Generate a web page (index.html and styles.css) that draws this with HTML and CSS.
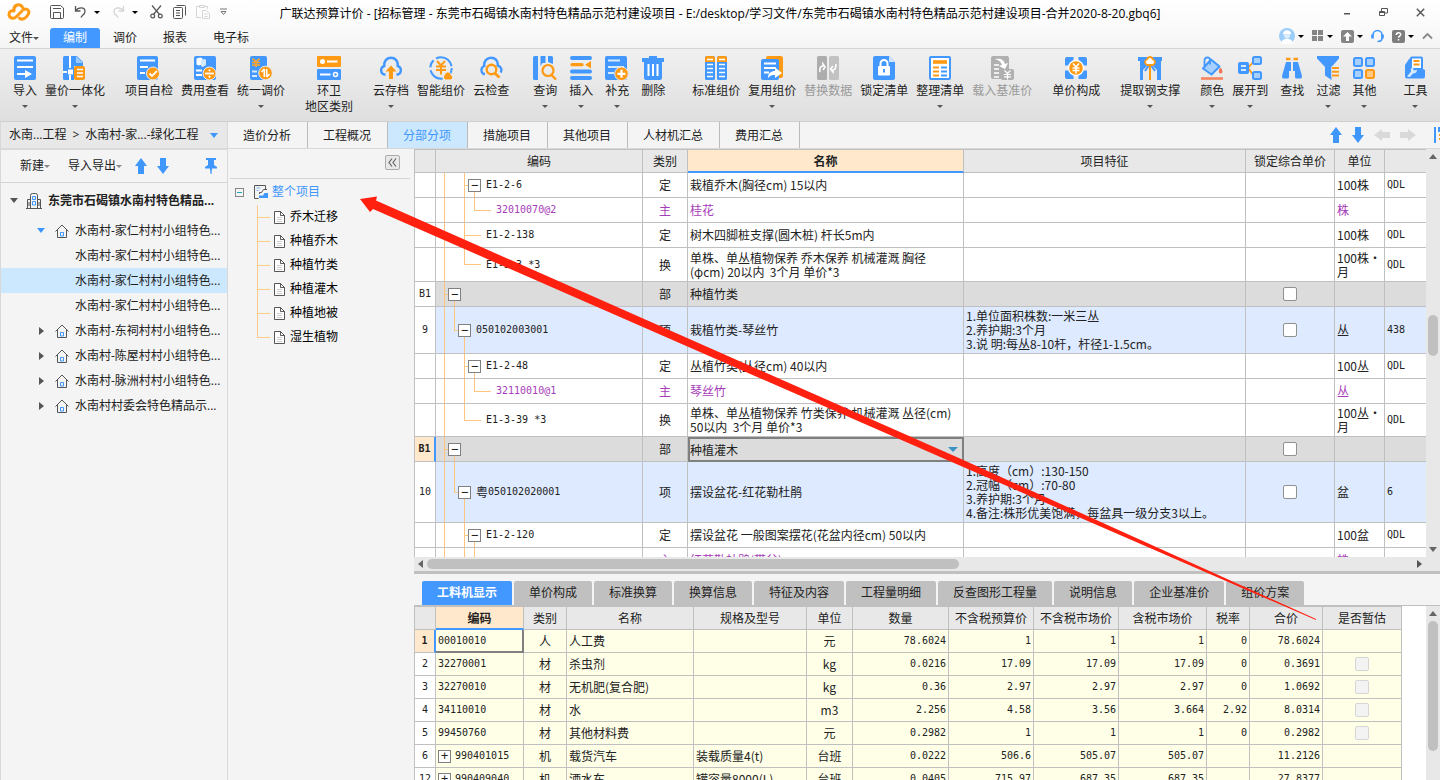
FILE: index.html
```html
<!DOCTYPE html>
<html lang="zh-CN">
<head>
<meta charset="utf-8">
<title>广联达预算计价</title>
<link rel="stylesheet" href="styles.css">
</head>
<body>
<div class="app">
<header class="top">
  <div class="titlebar">
    <div class="quick">
      <svg class="logo" width="24" height="18" viewBox="0 0 24 18" fill="none" stroke="#ff9a14" stroke-width="3" stroke-linecap="round" stroke-linejoin="round"><path d="M14.500 8.500L9 14c-2.500 2.500-7 1-7-2.500 0-3 2.500-4.500 5-3.500C6 1 14 0 15.500 4.500"/><path d="M12.500 15.200c2 1.500 4.500 1 6.500-1s4-4 2.500-6.500-4-2-5.500-.8"/></svg>
      <button class="ic save" aria-label="保存"><svg width="14" height="14" viewBox="0 0 14 14" fill="none" stroke="#555"><path d="M1.500.5h9L13.500 3v9.500a1 1 0 0 1-1 1h-11a1 1 0 0 1-1-1v-11a1 1 0 0 1 1-1zM3 3.500h8M3.500 13V7.500h7V13"/></svg></button>
      <button class="ic" aria-label="撤销"><svg width="13" height="14" viewBox="0 0 13 14" fill="none" stroke="#555" stroke-width="1.300"><path d="M1.500 1v5h5M1.500 6C4 2 11 1.500 11 6.500c0 3-3 3.500-4 6"/></svg></button><i class="caret dark"></i>
      <button class="ic" aria-label="重做"><svg width="13" height="14" viewBox="0 0 13 14" fill="none" stroke="#d4d4d4" stroke-width="1.300"><path d="M11.500 1v5h-5M11.500 6C9 2 2 1.500 2 6.500c0 3 3 3.500 4 6"/></svg></button><i class="caret dark"></i>
      <button class="ic" aria-label="剪切"><svg width="13" height="14" viewBox="0 0 13 14" fill="none" stroke="#555" stroke-width="1.200"><path d="M2 .5l7.500 9M11 .5l-7.500 9"/><circle cx="2.700" cy="11" r="1.900"/><circle cx="10.300" cy="11" r="1.900"/></svg></button>
      <button class="ic" aria-label="复制"><svg width="13" height="14" viewBox="0 0 13 14" fill="none" stroke="#555"><path d="M3.500.5h8a1 1 0 0 1 1 1v9M.5 3.500a1 1 0 0 1 1-1h7a1 1 0 0 1 1 1v9a1 1 0 0 1-1 1h-7a1 1 0 0 1-1-1zM3 5.500h4M3 8h4M3 10.500h4"/></svg></button>
      <button class="ic" aria-label="粘贴"><svg width="14" height="14" viewBox="0 0 14 14" fill="none" stroke="#d6d6d6"><path d="M5 12.500H.5v-11H3M9 1.500h2.500V4M3.500.5h5v2h-5zM6.500 5.500h4l3 3v5h-7zM8.500 9h3M8.500 11.500h3"/></svg></button>
      <button class="ic" aria-label="更多"><svg width="7" height="8" viewBox="0 0 7 8" fill="none" stroke="#777"><path d="M0 1h7M1 3.500h5L3.500 6.500z"/></svg></button>
    </div>
    <h1>广联达预算计价 - [招标管理 - 东莞市石碣镇水南村特色精品示范村建设项目 - E:/desktop/学习文件/东莞市石碣镇水南村特色精品示范村建设项目-合并2020-8-20.gbq6]</h1>
    <div class="winbtns">
      <button class="ic" aria-label="最小化"><svg width="8" height="10" viewBox="0 0 8 10"><path d="M1 6h6v1.500H1z" fill="#555"/></svg></button>
      <button class="ic" aria-label="还原"><svg width="9" height="9" viewBox="0 0 9 9" fill="none" stroke="#555"><path d="M.5 3.500h5v4h-5zM2.500 3V.5h6v4.500H6M.5 4.500h5"/></svg></button>
      <button class="ic" aria-label="关闭"><svg width="9" height="9" viewBox="0 0 9 9" fill="none" stroke="#555" stroke-width="1.400"><path d="M.8.8l7.400 7.400M8.200.8L.8 8.200"/></svg></button>
    </div>
  </div>
  <nav class="menubar">
    <button class="file">文件<i class="caret"></i></button>
    <button class="mtab on">编制</button><button class="mtab">调价</button><button class="mtab">报表</button><button class="mtab">电子标</button>
    <div class="tray">
      <svg width="16" height="16" viewBox="0 0 16 16"><circle cx="8" cy="8" r="8" fill="#9cccfa"/><path d="M2 15c1-4 4-4 6-4s5 0 6 4a8 8 0 0 1-12 0z" fill="#fff"/><path d="M4 5.500C4 1 12 1 12 5.500v1H4z" fill="#fff"/><path d="M5 7h6c0 5-6 5-6 0z" fill="#dceefe"/></svg><i class="caret dark"></i>
      <svg width="12" height="12" viewBox="0 0 12 12" fill="#858585"><path d="M0 0h5v5H0zM6 0h5v5H6zM0 6h5v5H0zM6 6h5v5H6z"/></svg><i class="caret dark"></i>
      <svg width="13" height="13" viewBox="0 0 13 13"><rect width="13" height="13" rx="2" fill="#858585"/><path d="M6.500 2L11 6.500H8V11H5V6.500H2z" fill="#fff"/></svg><i class="caret dark"></i>
      <svg class="head" width="13" height="14" viewBox="0 0 13 14" fill="none" stroke="#3f97fb" stroke-width="1.600"><path d="M2 7V6a4.500 4.500 0 0 1 9 0v3c0 2.500-2 3.500-4.500 3.500"/><path d="M1.500 5.500v4M11.500 5.500v4" stroke-width="2.600"/></svg>
      <svg width="13" height="13" viewBox="0 0 13 13"><rect width="13" height="13" rx="2" fill="#7d7d7d"/><path d="M4.300 5c0-3 4.400-3 4.400-.4 0 1.500-2.200 1.600-2.200 3.200M6.500 9v1.600" stroke="#fff" stroke-width="1.500" fill="none"/></svg><i class="caret dark"></i>
      <svg width="11" height="8" viewBox="0 0 11 8" fill="none" stroke="#888" stroke-width="1.800"><path d="M1 6.500L5.500 2 10 6.500"/></svg>
    </div>
  </nav>
  <div class="ribbon">
    <div class="grp">
      <button class="tool"><svg viewBox="0 0 24 24"><rect x="1" width="22" height="24" rx="2" fill="#4298ff"/><path d="M4 4.500h16M4 11h16M4 18h9" stroke="#fff" stroke-width="2"/><path d="M12 14l7 4-7 4z" fill="#fff"/></svg><span>导入</span><i class="caret"></i></button>
      <button class="tool"><svg viewBox="0 0 24 24"><path d="M0 1.500Q0 0 1.500 0H14l6 6v4h-9v14H1.500Q0 24 0 22.500z" fill="#4298ff"/><path d="M13 0l7 7h-7z" fill="#9dcbff"/><path d="M7 0v12M7 19v5M0 16h4" stroke="#fff" stroke-width="2"/><path d="M5 13.500h5v5H5z" fill="#fff"/><rect x="11" y="10" width="11" height="14" rx="2" fill="#ff9a14"/><path d="M14 13.500h6M14 17h6M14 20.500h6" stroke="#fff" stroke-width="1.400"/></svg><span>量价一体化</span><i class="caret"></i></button>
    </div>
    <div class="grp">
      <button class="tool"><svg viewBox="0 0 24 24"><rect x="0" width="21" height="24" rx="2" fill="#4298ff"/><path d="M3 4.500h15M3 11h8M3 17h5" stroke="#fff" stroke-width="2"/><circle cx="16" cy="17.500" r="6.500" fill="#ff9a14" stroke="#eee"/><path d="M12.500 17.500l2.500 2.500 5-5" stroke="#fff" stroke-width="1.800" fill="none"/></svg><span>项目自检</span></button>
      <button class="tool"><svg viewBox="0 0 24 24"><rect x="1" width="22" height="24" rx="2" fill="#4298ff"/><path d="M3.500 2.500l4-1 2 1v6l-4 1-2-1z" fill="#fff"/><path d="M8 4l4-1 1 1v5l-3 2-2-1z" fill="#d6eaff"/><path d="M3 14.500h6M3 19h6" stroke="#fff" stroke-width="2"/><circle cx="16.500" cy="17.500" r="6.500" fill="#ff9a14" stroke="#eee"/><path d="M12 17.500h9" stroke="#fff" stroke-width="1.800"/><circle cx="16.500" cy="14.300" r="1.100" fill="#fff"/><circle cx="16.500" cy="20.700" r="1.100" fill="#fff"/></svg><span>费用查看</span></button>
      <button class="tool"><svg viewBox="0 0 24 24"><rect x="1" width="17" height="24" rx="2" fill="#4298ff"/><path d="M3.500 2.500L7 6l3.500-3.500M3 6.500h8M3 9h8M7 6v5" stroke="#ffa52c" stroke-width="1.700" fill="none"/><path d="M3 15.500h5M3 20h5" stroke="#d6eaff" stroke-width="2"/><circle cx="16.500" cy="17" r="6.800" fill="#ff9a14" stroke="#eee"/><path d="M15.300 13v8M12.500 16l2.800-3M17.700 21v-8M20.500 18l-2.800 3" stroke="#fff" stroke-width="1.600" fill="none"/></svg><span>统一调价</span><i class="caret"></i></button>
    </div>
    <div class="grp">
      <button class="tool"><svg viewBox="0 0 24 24"><rect width="24" height="11" rx="1" fill="#ff9a14"/><rect y="13" width="24" height="11" rx="1" fill="#4298ff"/><circle cx="5.500" cy="5.500" r="2.500" fill="#fff"/><path d="M10 5.500h10.500M3 18.500h10.500" stroke="#fff" stroke-width="2"/><circle cx="18.500" cy="18.500" r="2" fill="#4298ff" stroke="#fff" stroke-width="1.500"/></svg><span>环卫</span><span>地区类别</span></button>
    </div>
    <div class="grp">
      <button class="tool"><svg viewBox="0 0 24 24"><path d="M6.500 18.500H5a4.500 4.500 0 0 1 .3-8.500C4-1 20-1 18.700 10a4.500 4.500 0 0 1 .3 8.500h-1.500" fill="none" stroke="#4298ff" stroke-width="2.400"/><path d="M12 9.500l5.500 6H14V23h-4v-7.500H6.500z" fill="#ff9a14"/></svg><span>云存档</span><i class="caret"></i></button>
      <button class="tool"><svg viewBox="0 0 24 24"><circle cx="12" cy="12" r="10.700" fill="none" stroke="#4298ff" stroke-width="2" stroke-dasharray="12 3 16 3 8 3 20 3"/><path d="M8 5l4 4.500L16 5M7 10.500h10M7 14h10M12 9v9.500" stroke="#ff9a14" stroke-width="2" fill="none"/><path d="M16 24a3.500 3.500 0 0 1-.3-5.500c1-3.500 5.300-3.500 6 0a3 3 0 0 1 .3 5.500z" fill="#ff9a14" stroke="#eee"/></svg><span>智能组价</span></button>
      <button class="tool"><svg viewBox="0 0 24 24"><path d="M6 18H4.500a4.500 4.500 0 0 1 .8-8C4-1 20-1 18.700 9.500a4.500 4.500 0 0 1 2.800 7" fill="none" stroke="#4298ff" stroke-width="2.400"/><circle cx="12.500" cy="13.500" r="4.800" fill="none" stroke="#ff9a14" stroke-width="2.400"/><path d="M16 17.500l4.500 4" stroke="#ff9a14" stroke-width="2.800"/></svg><span>云检查</span></button>
    </div>
    <div class="grp query">
      <button class="tool"><svg viewBox="0 0 24 24"><path d="M0 1.500Q0 0 1.500 0H5v24H1.500Q0 24 0 22.500zM7.500 0h5v7h-3l-2 3zM15 0h3.500Q20 0 20 1.500V8l-5-2z" fill="#4298ff"/><circle cx="15" cy="14.500" r="5.500" fill="none" stroke="#ff9a14" stroke-width="2.200"/><path d="M18.500 19l4.500 4.500" stroke="#ff9a14" stroke-width="2.400"/></svg><span>查询</span><i class="caret"></i></button>
      <button class="tool"><svg viewBox="0 0 24 24"><path d="M3 2h18M3 15.500h18M3 22h18" stroke="#4298ff" stroke-width="4" stroke-linecap="round"/><path d="M3 8.700h10" stroke="#ff9a14" stroke-width="3.200" stroke-linecap="round"/><path d="M22 5v7.500l-6-3.700z" fill="#ff9a14"/></svg><span>插入</span><i class="caret"></i></button>
      <button class="tool"><svg viewBox="0 0 24 24"><rect width="22" height="24" rx="2" fill="#4298ff"/><path d="M3 4.500h12M3 11h16M3 17h6" stroke="#d6eaff" stroke-width="2"/><circle cx="16.500" cy="17.800" r="6.800" fill="#ff9a14" stroke="#e8e8e8"/><path d="M12.500 17.800h8M16.500 13.800v8" stroke="#fff" stroke-width="2.200"/></svg><span>补充</span><i class="caret"></i></button>
      <button class="tool"><svg viewBox="0 0 24 24"><path d="M8 0h8v2h7v4h-2v16q0 2-2 2H5q-2 0-2-2V6H1V2h7z" fill="#4298ff"/><path d="M7.500 8v12M12 8v12M16.500 8v12" stroke="#fff" stroke-width="2"/></svg><span>删除</span></button>
    </div>
    <div class="grp compose">
      <button class="tool"><svg viewBox="0 0 24 24"><rect x="1" width="10" height="24" rx="1.500" fill="#4298ff"/><rect x="13" width="10" height="24" rx="1.500" fill="#4298ff"/><path d="M1 6V1.500L2.500 0h7L11 1.500V6zM13 6V1.500L14.500 0h7L23 1.500V6z" fill="#ff9a14"/><path d="M3 3.500h6M15 3.500h6M3 8.500h6M15 8.500h6M3 12.500h6M15 12.500h6M3 16.500h6M15 16.500h6M3 20.500h6M15 20.500h6" stroke="#fff" stroke-width="1.700"/></svg><span>标准组价</span></button>
      <button class="tool"><svg viewBox="0 0 24 24"><rect x="6" width="17" height="22" rx="2" fill="#ff9a14"/><rect x="1" y="3" width="18" height="21" rx="2" fill="#4298ff"/><path d="M4 7.500h12M4 12h12M4 16.500h5" stroke="#fff" stroke-width="1.800"/><path d="M8 22c0-5 3-7 7-7v-3.500l7 5.500-7 5v-3c-3 0-5 .5-7 3z" fill="#fff"/></svg><span>复用组价</span><i class="caret"></i></button>
      <button class="tool off" disabled><svg viewBox="0 0 24 24"><rect x="1" width="10" height="24" rx="1.500" fill="#adadad"/><rect x="13" width="10" height="24" rx="1.500" fill="#c2c2c2"/><path d="M4 16c-1-4 1-6 3-6V8l2 3-2 3M20 8c0 5-2 6-3 6v2l-2.500-3L17 10" fill="none" stroke="#fff" stroke-width="1.600"/></svg><span>替换数据</span></button>
      <button class="tool"><svg viewBox="0 0 24 24"><path d="M3 0h14l6 6v16q0 2-2 2H3q-2 0-2-2V2q0-2 2-2z" fill="#4298ff"/><path d="M17 0l6 6h-6z" fill="#d0e6ff"/><rect x="6" y="10" width="12" height="9.500" rx="1" fill="#fff"/><path d="M8.500 10V7.500a3.500 3.500 0 0 1 7 0V10" fill="none" stroke="#fff" stroke-width="2"/><path d="M12 13v3.500" stroke="#4298ff" stroke-width="2"/></svg><span>锁定清单</span></button>
      <button class="tool"><svg viewBox="0 0 24 24"><rect x="2" y="1" width="20" height="22" rx="1" fill="#fff" stroke="#4298ff" stroke-width="2"/><path d="M5 6h14" stroke="#ff9a14" stroke-width="3.600"/><path d="M5 11.500h6M5 15.500h6M5 19.500h6" stroke="#ff9a14" stroke-width="2"/><path d="M13 11.500h6M13 15.500h6M13 19.500h6" stroke="#4298ff" stroke-width="2"/></svg><span>整理清单</span><i class="caret"></i></button>
      <button class="tool off" disabled><svg viewBox="0 0 24 24"><path d="M3 0h15l1 2v20l-1 1H3q-2 0-2-2V2q0-2 2-2z" fill="#b0b0b0"/><path d="M4 9h5M4 13h5M4 17h5M4 21h5" stroke="#fff" stroke-width="1.600"/><path d="M5 3c6-1 9 1 10 5l3-1-3 6-6-3 3-1c-1-3-3-5-7-6z" fill="#fff"/><rect x="11" y="13" width="13" height="11" rx="2" fill="#b0b0b0"/><path d="M14.500 14.500l3 3 3-3M14 18.500h7M14 20.800h7M17.500 17.500v6" stroke="#fff" stroke-width="1.200" fill="none"/></svg><span>载入基准价</span></button>
    </div>
    <div class="grp">
      <button class="tool"><svg viewBox="0 0 24 24"><path d="M1 3q0-2 2-2h6.500v3h5V1H21q2 0 2 2v6.500h-3v5h3V21q0 2-2 2h-6.500v-3h-5v3H3q-2 0-2-2v-6.500h3v-5H1z" fill="#4298ff"/><circle cx="12" cy="12" r="8.200" fill="#fff"/><circle cx="12" cy="12" r="6.800" fill="#ff9a14"/><path d="M9 7.500l3 3.500 3-3.500M8.500 12h7M8.500 14.500h7M12 11v6.500" stroke="#fff" stroke-width="1.600" fill="none"/></svg><span>单价构成</span></button>
    </div>
    <div class="grp">
      <button class="tool"><svg viewBox="0 0 24 24"><path d="M0 1h24v4h-1v19h-4V14l-5-5h-4l-5 5v10H2V5H0z" fill="#4298ff"/><path d="M10.500 10L7 15M13.500 10l3.500 5" stroke="#4298ff" stroke-width="2"/><path d="M12 8v16" stroke="#ff9a14" stroke-width="2"/><path d="M7 6q0-2 2-2.500Q10 1 12 1t3 2.500q2 .5 2 2.500t-2 3H9Q7 8 7 6z" fill="#fff" stroke="#ff9a14" stroke-width="1.800"/></svg><span>提取钢支撑</span><i class="caret"></i></button>
    </div>
    <div class="grp find">
      <div class="pair">
        <button class="tool"><svg viewBox="0 0 24 24"><path d="M11 3.500l8.500 7-8 8L3 12.500z" fill="#a6d0ff" stroke="#4298ff" stroke-width="2" stroke-linejoin="round"/><path d="M4.500 10V4.500q0-3 2.800-3T10 4v4.500" fill="none" stroke="#4298ff" stroke-width="1.800"/><path d="M20.500 12q3 5 .2 5t-.2-5z" fill="#f5724e" stroke="#f5724e"/><path d="M1 22.500h22" stroke="#f5845f" stroke-width="2.600"/></svg><span>颜色</span><i class="caret"></i></button>
        <button class="tool"><svg viewBox="0 0 24 24"><path d="M10 12l6-7M10 12l6 8" stroke="#ff9a14" stroke-width="1.800"/><rect x="0" y="6" width="11" height="12" rx="2" fill="#4298ff"/><path d="M3 10h5M3 14h5" stroke="#d6eaff" stroke-width="1.800"/><rect x="15" y="1" width="8" height="7" rx="1.500" fill="#a6d0ff" stroke="#4298ff" stroke-width="2"/><rect x="15" y="16" width="8" height="7" rx="1.500" fill="#a6d0ff" stroke="#4298ff" stroke-width="2"/></svg><span>展开到</span><i class="caret"></i></button>
      </div>
      <button class="tool"><svg viewBox="0 0 24 24"><path d="M6 6h5v9H9v6q0 1.500-1.500 1.500h-4Q2 22.500 2 20zM18 6h-5v9h2v6q0 1.500 1.500 1.500h4Q22 22.500 22 20z" fill="#4298ff"/><path d="M6 3h4.500M13.500 3H18" stroke="#ff9a14" stroke-width="2.400"/></svg><span>查找</span></button>
      <button class="tool"><svg viewBox="0 0 24 24"><path d="M1 0h22v2.500L15.500 11v13L9 19.500V11L1 2.500z" fill="#4298ff"/><path d="M15.500 12h8M15.500 15.500h8M15.500 19h8" stroke="#eee" stroke-width="3.600"/><path d="M16 12h7M16 15.800h7M16 19.600h7" stroke="#ff9a14" stroke-width="2"/></svg><span>过滤</span><i class="caret"></i></button>
      <button class="tool"><svg viewBox="0 0 24 24" stroke-width="2"><g fill="#a6d0ff" stroke="#4298ff"><rect x="2" y="2" width="8" height="8" rx="1.500"/><rect x="14" y="2" width="8" height="8" rx="1.500"/><rect x="2" y="14" width="8" height="8" rx="1.500"/></g><rect x="14" y="14" width="8" height="8" rx="1.500" fill="#ffc982" stroke="#ff9a14"/></svg><span>其他</span><i class="caret"></i></button>
    </div>
    <div class="grp misc">
      <button class="tool"><svg viewBox="0 0 24 24"><rect x="8" y="1.500" width="11" height="13" rx="1" fill="#fff" stroke="#4298ff" stroke-width="2"/><path d="M10.500 5h6M10.500 8.500h6" stroke="#ff9a14" stroke-width="1.800"/><path d="M2 9l4-6 2-1v10h10l4 2v6.500q0 2-2 2H4q-2 0-2-2z" fill="#4298ff"/><path d="M4 20.500l4-5q-1-4 3-5l-1 3 2 1 2-1q0 4-4 4l-3 3.500z" fill="#d6eaff"/></svg><span>工具</span><i class="caret"></i></button>
    </div>
  </div>
</header>
<div class="body">
  <aside class="left">
    <button class="crumb">水南...工程 <b>&gt;</b> 水南村-家...-绿化工程<i class="caret blue"></i></button>
    <div class="ltools">
      <button>新建<i class="caret gray"></i></button>
      <button>导入导出<i class="caret gray"></i></button>
      <button class="ic" aria-label="上移"><svg width="12" height="16" viewBox="0 0 12 16" fill="#3f97fb"><path d="M6 0l6 8H9v8H3V8H0z"/></svg></button>
      <button class="ic" aria-label="下移"><svg width="12" height="16" viewBox="0 0 12 16" fill="#3f97fb"><path d="M6 16l6-8H9V0H3v8H0z"/></svg></button>
      <button class="ic pin" aria-label="固定"><svg width="12" height="16" viewBox="0 0 12 16" fill="#3f97fb"><path d="M1 0h10v2H9v5l3 2v1.500H7L6.500 16h-1L5 10.500H0V9l3-2V2H1z"/></svg></button>
    </div>
    <ul class="tree">
      <li class="root"><i class="caret"></i><svg width="16" height="16" viewBox="0 0 16 16" fill="none" stroke="#555"><path d="M0 15.500h16M4.500 15V2.500q0-2 2-2h3q2 0 2 2V15M1.500 15V6.500h3M11.500 6.500h3V15M3 9v4M13 9v4"/><path d="M6.500 3.500h3v3h-3zM6.500 8.500h3V12h-3z" stroke="#3f97fb"/></svg>东莞市石碣镇水南村特色精品...</li>
      <li class="node"><i class="caret blue"></i><svg class="house" viewBox="0 0 14 14"><use href="#house"/></svg>水南村-家仁村村小组特色...</li>
      <li class="sub">水南村-家仁村村小组特色...</li>
      <li class="sub on">水南村-家仁村村小组特色...</li>
      <li class="sub">水南村-家仁村村小组特色...</li>
      <li class="node"><i class="caret side"></i><svg class="house" viewBox="0 0 14 14"><use href="#house"/></svg>水南村-东祠村村小组特色...</li>
      <li class="node"><i class="caret side"></i><svg class="house" viewBox="0 0 14 14"><use href="#house"/></svg>水南村-陈屋村村小组特色...</li>
      <li class="node"><i class="caret side"></i><svg class="house" viewBox="0 0 14 14"><use href="#house"/></svg>水南村-脉洲村村小组特色...</li>
      <li class="node"><i class="caret side"></i><svg class="house" viewBox="0 0 14 14"><use href="#house"/></svg>水南村村委会特色精品示...</li>
    </ul>
    <svg class="defs" aria-hidden="true"><defs>
      <g id="house" fill="none"><path d="M.5 7.500L7 1l6.500 6.500M2.500 6v7.500h9V6" stroke="#555"/><path d="M5.500 8.500h3v3.500h-3z" stroke="#3f97fb"/></g>
      <g id="doc" fill="none"><path d="M.5.5h6l4 4v8h-10z" fill="#fff" stroke="#555"/><path d="M6.500.5v4h4" stroke="#555"/><path d="M3 6.500h5M3 8.500h5M3 10.500h5" stroke="#ccc"/></g>
    </defs></svg>
  </aside>
  <main class="main">
    <nav class="tabs">
      <button>造价分析</button><button>工程概况</button><button class="on">分部分项</button><button>措施项目</button><button>其他项目</button><button>人材机汇总</button><button>费用汇总</button>
      <div class="moves">
        <button class="ic" aria-label="上移行"><svg width="12" height="16" viewBox="0 0 12 16" fill="#3f97fb"><path d="M6 0l6 8H9v8H3V8H0z"/></svg></button>
        <button class="ic" aria-label="下移行"><svg width="12" height="16" viewBox="0 0 12 16" fill="#3f97fb"><path d="M6 16l6-8H9V0H3v8H0z"/></svg></button>
        <button class="ic" aria-label="升级"><svg width="16" height="12" viewBox="0 0 16 12" fill="#d9d9d9"><path d="M0 6l8-6v3h8v6H8v3z"/></svg></button>
        <button class="ic" aria-label="降级"><svg width="16" height="12" viewBox="0 0 16 12" fill="#d9d9d9"><path d="M16 6L8 0v3H0v6h8v3z"/></svg></button>
        <button class="ic last" aria-label="列设置"><svg width="6" height="16" viewBox="0 0 6 16"><path d="M0 0h2v16H0zM4 0h2v5H4z" fill="#3f97fb"/><path d="M5 7h1v2H5zM5 11h1v2H5z" fill="#ff9a14"/></svg></button>
      </div>
    </nav>
    <div class="work">
      <section class="outline">
        <div class="fold"><button aria-label="收起"><svg width="9" height="9" viewBox="0 0 9 9" fill="none" stroke="#666" stroke-width="1.200"><path d="M4 .5l-3 4 3 4M8 .5l-3 4 3 4"/></svg></button></div>
        <div class="all"><i class="mbox"></i><svg width="14" height="14" viewBox="0 0 14 14" fill="none"><path d="M4.500 13.500h-4V.5h11v4M13 4.500H9.500l-2 3h-2v1.500" stroke="#555"/><path d="M2.500 3h4M2.500 5.500h2" stroke="#7db8fa"/><path d="M5 13v-2.500h4L10.500 8H14v5z" fill="#3f97fb"/></svg>整个项目</div>
        <ul>
          <li><svg viewBox="0 0 11 13"><use href="#doc"/></svg>乔木迁移</li>
          <li><svg viewBox="0 0 11 13"><use href="#doc"/></svg>种植乔木</li>
          <li><svg viewBox="0 0 11 13"><use href="#doc"/></svg>种植竹类</li>
          <li><svg viewBox="0 0 11 13"><use href="#doc"/></svg>种植灌木</li>
          <li><svg viewBox="0 0 11 13"><use href="#doc"/></svg>种植地被</li>
          <li><svg viewBox="0 0 11 13"><use href="#doc"/></svg>湿生植物</li>
        </ul>
      </section>
      <section class="panes">
        <div class="upper">
          <div class="view">
            <table class="bill">
              <colgroup><col class="c-no"><col class="c-code"><col class="c-kind"><col class="c-name"><col><col class="c-lock"><col class="c-unit"><col class="c-qty"></colgroup>
              <thead><tr><th></th><th>编码</th><th>类别</th><th class="cur">名称</th><th>项目特征</th><th>锁定综合单价</th><th>单位</th><th></th></tr></thead>
              <tbody>
                <tr><td></td><td class="code quota"><button class="box">−</button>E1-2-6</td><td>定</td><td>栽植乔木(胸径cm) 15以内</td><td></td><td></td><td>100株</td><td class="mono">QDL</td></tr>
                <tr class="mat"><td></td><td class="code material">32010070@2</td><td>主</td><td>桂花</td><td></td><td></td><td>株</td><td></td></tr>
                <tr><td></td><td class="code leaf">E1-2-138</td><td>定</td><td>树木四脚桩支撑(圆木桩) 杆长5m内</td><td></td><td></td><td>100株</td><td class="mono">QDL</td></tr>
                <tr class="r2"><td></td><td class="code leaf end">E1-3-3 *3</td><td>换</td><td>单株、单丛植物保养 乔木保养 机械灌溉 胸径<br>(φcm) 20以内&nbsp; 3个月 单价*3</td><td></td><td></td><td>100株·<br>月</td><td class="mono">QDL</td></tr>
                <tr class="part"><td>B1</td><td class="code section"><button class="box">−</button></td><td>部</td><td>种植竹类</td><td></td><td><input type="checkbox" aria-label="锁定种植竹类"></td><td></td><td></td></tr>
                <tr class="item r3"><td>9</td><td class="code entry"><button class="box">−</button>050102003001</td><td>项</td><td>栽植竹类-琴丝竹</td><td>1.单位面积株数:一米三丛<br>2.养护期:3个月<br>3.说 明:每丛8-10杆，杆径1-1.5cm。</td><td><input type="checkbox" aria-label="锁定琴丝竹"></td><td>丛</td><td class="mono">438</td></tr>
                <tr><td></td><td class="code quota"><button class="box">−</button>E1-2-48</td><td>定</td><td>丛植竹类(丛径cm) 40以内</td><td></td><td></td><td>100丛</td><td class="mono">QDL</td></tr>
                <tr class="mat"><td></td><td class="code material">32110010@1</td><td>主</td><td>琴丝竹</td><td></td><td></td><td>丛</td><td></td></tr>
                <tr class="r2 low"><td></td><td class="code leaf end">E1-3-39 *3</td><td>换</td><td>单株、单丛植物保养 竹类保养 机械灌溉 丛径(cm)<br>50以内&nbsp; 3个月 单价*3</td><td></td><td></td><td>100丛·<br>月</td><td class="mono">QDL</td></tr>
                <tr class="part now"><td>B1</td><td class="code section"><button class="box">−</button></td><td>部</td><td class="edit"><select aria-label="名称"><option>种植灌木</option></select></td><td></td><td><input type="checkbox" aria-label="锁定种植灌木"></td><td></td><td></td></tr>
                <tr class="item r4"><td>10</td><td class="code entry"><button class="box">−</button><span>粤</span>050102020001</td><td>项</td><td>摆设盆花-红花勒杜鹃</td><td>1.高度（cm）:130-150<br>2.冠幅（cm）:70-80<br>3.养护期:3个月<br>4.备注:株形优美饱满，每盆具一级分支3以上。</td><td><input type="checkbox" aria-label="锁定红花勒杜鹃"></td><td>盆</td><td class="mono">6</td></tr>
                <tr><td></td><td class="code quota"><button class="box">−</button>E1-2-120</td><td>定</td><td>摆设盆花 一般图案摆花(花盆内径cm) 50以内</td><td></td><td></td><td>100盆</td><td class="mono">QDL</td></tr>
                <tr class="mat"><td></td><td class="code material more"></td><td>主</td><td>红花勒杜鹃(带盆)</td><td></td><td></td><td>株</td><td></td></tr>
              </tbody>
            </table>
          </div>
          <div class="vbar"><i class="caret up"></i><span class="room"></span><i class="thumb"></i><span class="room rest"></span><i class="caret down"></i></div>
        </div>
        <div class="hbar"><i class="caret west"></i><i class="thumb"></i><i class="caret side"></i></div>
        <div class="lower">
          <nav class="dtabs"><button class="on">工料机显示</button><button>单价构成</button><button>标准换算</button><button>换算信息</button><button>特征及内容</button><button>工程量明细</button><button>反查图形工程量</button><button>说明信息</button><button>企业基准价</button><button>组价方案</button></nav>
          <div class="detail">
            <div class="view">
              <table class="res">
                <colgroup><col class="c-no"><col class="d-code"><col class="d-kind"><col class="d-name"><col class="d-spec"><col class="d-unit"><col class="d-qty"><col class="d-price"><col class="d-price"><col class="d-tax"><col class="d-kind"><col class="d-sum"><col class="d-est"></colgroup>
                <thead><tr><th></th><th class="cur">编码</th><th>类别</th><th>名称</th><th>规格及型号</th><th>单位</th><th>数量</th><th>不含税预算价</th><th>不含税市场价</th><th>含税市场价</th><th>税率</th><th>合价</th><th>是否暂估</th></tr></thead>
                <tbody>
                  <tr class="now"><td>1</td><td>00010010</td><td>人</td><td>人工费</td><td></td><td>元</td><td>78.6024</td><td>1</td><td>1</td><td>1</td><td>0</td><td>78.6024</td><td></td></tr>
                  <tr><td>2</td><td>32270001</td><td>材</td><td>杀虫剂</td><td></td><td>kg</td><td>0.0216</td><td>17.09</td><td>17.09</td><td>17.09</td><td>0</td><td>0.3691</td><td><input type="checkbox" disabled aria-label="暂估杀虫剂"></td></tr>
                  <tr><td>3</td><td>32270010</td><td>材</td><td>无机肥(复合肥)</td><td></td><td>kg</td><td>0.36</td><td>2.97</td><td>2.97</td><td>2.97</td><td>0</td><td>1.0692</td><td><input type="checkbox" disabled aria-label="暂估无机肥"></td></tr>
                  <tr><td>4</td><td>34110010</td><td>材</td><td>水</td><td></td><td>m3</td><td>2.256</td><td>4.58</td><td>3.56</td><td>3.664</td><td>2.92</td><td>8.0314</td><td><input type="checkbox" disabled aria-label="暂估水"></td></tr>
                  <tr><td>5</td><td>99450760</td><td>材</td><td>其他材料费</td><td></td><td>元</td><td>0.2982</td><td>1</td><td>1</td><td>1</td><td>0</td><td>0.2982</td><td><input type="checkbox" disabled aria-label="暂估其他材料费"></td></tr>
                  <tr><td>6</td><td><button class="box">+</button>990401015</td><td>机</td><td>载货汽车</td><td>装载质量4(t)</td><td>台班</td><td>0.0222</td><td>506.6</td><td>505.07</td><td>505.07</td><td></td><td>11.2126</td><td></td></tr>
                  <tr><td>12</td><td><button class="box">+</button>990409040</td><td>机</td><td>洒水车</td><td>罐容量8000(L)</td><td>台班</td><td>0.0405</td><td>715.97</td><td>687.35</td><td>687.35</td><td></td><td>27.8377</td><td></td></tr>
                </tbody>
              </table>
            </div>
            <div class="vbar"><i class="caret up"></i><i class="thumb long"></i></div>
          </div>
        </div>
      </section>
    </div>
  </main>
</div>
<svg class="pointer" width="960" height="428" viewBox="358 194 960 428" aria-hidden="true"><path d="M360 199L377 196.500L376 200.500L960 458.500L1316 619L1316 620L954 463L373 209L370 212z" fill="#ff2010"/></svg>
</div>
</body>
</html>
```

FILE: styles.css
```css
* { box-sizing: border-box; }
body { margin: 0; font: 12px/16px "Open Sans", "Noto Sans CJK SC", sans-serif; color: #222; background: #f4f4f4; }
button { border: 0; background: none; padding: 0; margin: 0; font: inherit; color: inherit; white-space: nowrap; }
ul { list-style: none; margin: 0; padding: 0; }
svg { display: block; flex: none; }
.app { height: 100vh; display: flex; flex-direction: column; overflow: hidden; position: relative; }
.ic { display: flex; align-items: center; justify-content: center; flex: none; }

.caret { flex: none; width: 0; height: 0; border: 3px solid transparent; border-top-color: #555; border-bottom: 0; }
.caret.dark { border-top-color: #000; }
.caret.gray { border-top-color: #888; }
.caret.blue { border-width: 5px 4px 0; border-top-color: #3f97fb; }
.caret.side { border: 4px solid transparent; border-left: 5px solid #555; border-right: 0; }
.caret.west { border: 4px solid transparent; border-right: 5px solid #666; border-left: 0; }
.caret.up { border: 4px solid transparent; border-bottom: 5px solid #666; border-top: 0; }
.caret.down { border: 4px solid transparent; border-top: 5px solid #666; border-bottom: 0; }

/* Title, menu and ribbon */
.top { flex: none; }
.titlebar { display: grid; grid-template-columns: 1fr auto 1fr; height: 28px; background: linear-gradient(#fff, #fafafa); }
.quick { display: flex; align-items: center; gap: 10px; padding: 0 0 4px 7px; }
.quick .caret { margin: 0 2px 0 -3px; }
.save { margin-left: 9px; }
h1 { margin: 0; font-size: 12px; line-height: 28px; font-weight: 400; color: #000; white-space: nowrap; }
.winbtns { display: flex; justify-content: flex-end; align-items: center; gap: 28px; padding: 0 15px 4px 0; }
.menubar { display: flex; height: 21px; background: linear-gradient(#fafafa, #f4f4f4); border-bottom: 1px solid #d4d4d4; }
.file { width: 50px; padding-left: 9px; display: flex; align-items: center; }
.mtab { padding: 0 13px; }
.mtab.on { background: #4298ff; color: #fff; border-radius: 3px 3px 0 0; }
.tray { margin-left: auto; display: flex; align-items: center; gap: 8px; padding: 0 7px 4px 0; }
.tray .caret { margin-left: -5px; }
.ribbon { display: flex; gap: 20px; height: 73px; padding: 7px 12px 0 13px; background: linear-gradient(#f0f0f0, #dfdfdf); border-bottom: 1px solid #cfcfcf; overflow: hidden; }
.grp { display: flex; gap: 8px; flex: none; }
.pair { display: flex; gap: 8px; }
.grp.query { gap: 12px; margin-left: 4px; }
.grp.compose { margin-left: 7px; }
.grp.find { gap: 12px; }
.grp.misc { margin-left: 7px; }
.tool { display: flex; flex-direction: column; align-items: center; }
.tool svg { width: 24px; height: 24px; margin-bottom: 3px; }
.tool .caret { margin-top: 6px; }
.tool.off { color: #999; }

/* Project tree */
.body { flex: 1; min-height: 0; display: flex; }
.left { flex: none; width: 228px; border: 1px solid #d8d8d8; border-width: 0 1px; }
.crumb { display: flex; align-items: center; width: 100%; height: 28px; padding: 0 9px 0 8px; background: #e8e8e8; border-bottom: 2px solid #dadada; }
.crumb b { font-weight: 400; margin: 0 6px; }
.crumb .caret { margin-left: auto; }
.ltools { display: flex; align-items: center; height: 33px; padding: 0 10px 0 19px; gap: 10px; border-bottom: 1px solid #d4d4d4; }
.ltools button { display: flex; align-items: center; }
.ltools button + button:not(.ic) { margin: 0 3px 0 8px; }
.ltools .pin { margin-left: auto; }
.tree li { display: flex; align-items: center; height: 25px; white-space: nowrap; overflow: hidden; }
.tree .root { height: 35px; font-weight: 700; padding-left: 9px; }
.root .caret { border-width: 5px 4px 0; }
.root svg { margin: 0 6px 0 8px; }
.tree .node { padding-left: 36px; }
.node .caret.side { margin: 0 2px; width: 5px; }
.house { width: 14px; height: 14px; margin: 0 6px 0 9px; }
.node .caret.blue { margin-right: 1px; }
.tree .sub { padding-left: 74px; }
.tree .on { background: #cce8ff; }
.defs { width: 0; height: 0; }

/* Section tabs */
.main { flex: 1; min-width: 0; display: flex; flex-direction: column; }
.tabs { display: flex; flex: none; height: 27px; border-bottom: 1px solid #d8d8d8; }
.tabs > button { padding: 2px 16px 0 15px; border-right: 1px solid #bbb; }
.tabs > .on { background: #cce8ff; color: #3f97fb; }
.moves { margin-left: auto; display: flex; align-items: center; gap: 10px; }
.moves .last { margin-left: 8px; }
.work { flex: 1; min-height: 0; display: flex; }

.outline { flex: none; width: 186px; padding: 0 4px 0 2px; }
.fold { height: 30px; border-bottom: 1px solid #d4d4d4; display: flex; justify-content: flex-end; align-items: center; padding: 0 10px 2px 0; }
.fold button { width: 15px; height: 15px; border: 1px solid #aaa; border-radius: 2px; background: #e8e8e8; display: flex; align-items: center; justify-content: center; }
.all { display: flex; align-items: center; height: 26px; padding-left: 5px; color: #3f97fb; }
.all svg { margin: 0 4px 0 10px; }
.mbox { width: 9px; height: 9px; border: 1px solid #888; background: linear-gradient(#18a8b8, #18a8b8) center / 5px 1px no-repeat; }
.outline li { display: flex; align-items: center; height: 24px; padding-left: 44px; color: #000;
  background: linear-gradient(#fc8, #fc8) 27px 0 / 1px 100% no-repeat, linear-gradient(#fc8, #fc8) 27px 50% / 13px 1px no-repeat; }
.outline li:last-child { background-size: 1px 50%, 13px 1px; }
.outline li svg { width: 11px; height: 13px; margin-right: 5px; }

/* Grids */
.panes { flex: 1; min-width: 0; display: flex; flex-direction: column; }
.upper { flex: 1 1 408px; min-height: 0; display: flex; }
.view { flex: 1; min-width: 0; overflow: hidden; }
table { border-collapse: separate; border-spacing: 0; table-layout: fixed; font-family: "Noto Sans CJK SC", sans-serif; line-height: 14px; }
.bill { width: 100%; background: #fff; }
th, td { border: 1px solid #c0c0c0; border-width: 0 1px 1px 0; padding: 0 2px; white-space: nowrap; overflow: hidden; text-align: left; }
th { height: 24px; border-top-width: 1px; background: #e8e8e8; font-weight: 400; text-align: center; }
td { height: 25px; }
th:first-child, td:first-child { border-left-width: 1px; }
th.cur { background: #ffe8cc; font-weight: 700; border-bottom: 2px solid #4298ff; }
td:first-child { text-align: center; background: #fff; font: 10px/14px "DejaVu Sans Mono", monospace; padding: 0; }
td:nth-child(3) { text-align: center; }
.c-no { width: 22px; } .c-code { width: 207px; } .c-kind { width: 45px; } .c-name { width: 276px; }
.c-lock { width: 89px; } .c-unit { width: 50px; } .c-qty { width: 41px; }
.bill td:last-child, .bill th:last-child { border-right: 0; }
.r2 td { height: 34px; }
.low td { height: 33px; }
.r3 td { height: 47px; }
.r4 td { height: 61px; }
.mono, .code { font: 10px/14px "DejaVu Sans Mono", monospace; }
.code span { font: 12px/14px "Noto Sans CJK SC", sans-serif; vertical-align: middle; }
.part td { background-color: #dcdcdc; }
.item td { background-color: #deeaff; }
.part td:first-child, .item td:first-child { background: #fff; }
.mat { color: #a63db8; }
.box { width: 13px; height: 13px; border: 1px solid #808080; background: #fff; color: #222; font: 12px/11px "DejaVu Sans Mono", monospace; text-align: center; vertical-align: middle; margin-right: 5px; }
.bill td:nth-child(6) { text-align: center; }
input[type=checkbox] { appearance: none; display: block; width: 14px; height: 14px; margin: 0 auto; border: 1px solid #909090; border-radius: 2px; background: #fff; }
input[type=checkbox]:disabled { border-color: #d6d6d6; background: #f3f3f3; }
select { appearance: none; display: block; width: 100%; height: 21px; border: 0; padding: 0; margin: 0; font: inherit; color: inherit; border-radius: 0; background: none; }
.edit { position: relative; border: 2px solid #808080; padding: 0; }
.edit::after { content: ""; position: absolute; right: 4px; top: 8px; border: 5px solid transparent; border-top-color: #3d94c4; border-bottom: 0; }
tbody .now td:first-child { background: #ffe8cc; font-weight: 700; border-right: 2px solid #4298ff; }

/* Guide lines of the code column: rails at 8, 18, 28 and 38px */
.code { background-repeat: no-repeat; --g: linear-gradient(#fdc57d, #fdc57d); background-image: var(--g), var(--g), var(--g), var(--g); }
.section { padding-left: 12px; background-position: 8px 0, 8px 50%, 18px 100%; background-size: 1px 100%, 4px 1px, 1px 50%, 0 0; }
.entry { padding-left: 22px; background-position: 8px 0, 18px 0, 18px 50%, 28px 100%; background-size: 1px 100%, 1px 50%, 4px 1px, 1px 50%; }
.quota { padding-left: 32px; background-position: 8px 0, 28px 0, 28px 50%, 38px 100%; background-size: 1px 100%, 1px 100%, 4px 1px, 1px 50%; }
.leaf { padding-left: 50px; background-position: 8px 0, 28px 0, 28px 50%, 0 0; background-size: 1px 100%, 1px 100%, 17px 1px, 0 0; }
.leaf.end { background-size: 1px 100%, 1px 50%, 17px 1px, 0 0; }
.material { padding-left: 60px; background-position: 8px 0, 28px 0, 38px 0, 38px 50%; background-size: 1px 100%, 1px 100%, 1px 50%, 17px 1px; }

/* Scroll bars */
.vbar { flex: none; width: 14px; background: #e8e8e8; display: flex; flex-direction: column; align-items: center; padding: 5px 0; }
.thumb { background: #c0c0c0; border-radius: 5px; flex: none; }
.vbar .thumb { width: 10px; height: 41px; }
.vbar .thumb.long { height: 130px; margin-top: 5px; }
.room { flex: 156 1 0; }
.room.rest { flex: 192 1 0; }
.hbar { flex: none; display: flex; align-items: center; height: 17px; padding: 0 18px 0 4px; background: #e8e8e8; border-bottom: 3px solid #c0c0c0; }
.hbar .thumb { width: 53%; height: 10px; margin: 0 auto 0 4px; }

/* Resource detail */
.lower { flex: 0 0 206px; min-height: 0; display: flex; flex-direction: column; }
.dtabs { flex: none; display: flex; gap: 2px; height: 32px; padding: 7px 8px 0; border-bottom: 1px solid #c0c0c0; }
.dtabs button { padding: 0 15px; background: #c0c0c0; border-radius: 2px 2px 0 0; }
.dtabs .on { background: #4298ff; color: #fff; font-weight: 700; }
.detail { flex: 1; min-height: 0; display: flex; background: #fff; }
.res { width: 988px; }
.res td { height: 23px; background: #ffffe8; }
.res td:first-child { background: #fff; }
.res td:nth-child(6), .res td:last-child { text-align: center; }
.res td:nth-child(2) { font: 10px/14px "DejaVu Sans Mono", monospace; }
.res td:nth-child(n+7):nth-child(-n+12) { font: 10px/14px "DejaVu Sans Mono", monospace; text-align: right; }
.res .now td:nth-child(2) { border: 2px solid #808080; border-width: 0 2px 2px 0; }
.res .box { margin-right: 4px; }
.d-code { width: 88px; } .d-kind { width: 43px; } .d-name { width: 127px; } .d-spec { width: 113px; } .d-unit { width: 46px; }
.d-qty { width: 96px; } .d-price { width: 85px; } .d-tax { width: 88px; } .d-sum { width: 73px; } .d-est { width: 79px; }

/* Annotation arrow */
.pointer { position: absolute; left: 358px; top: 194px; pointer-events: none; }
```
